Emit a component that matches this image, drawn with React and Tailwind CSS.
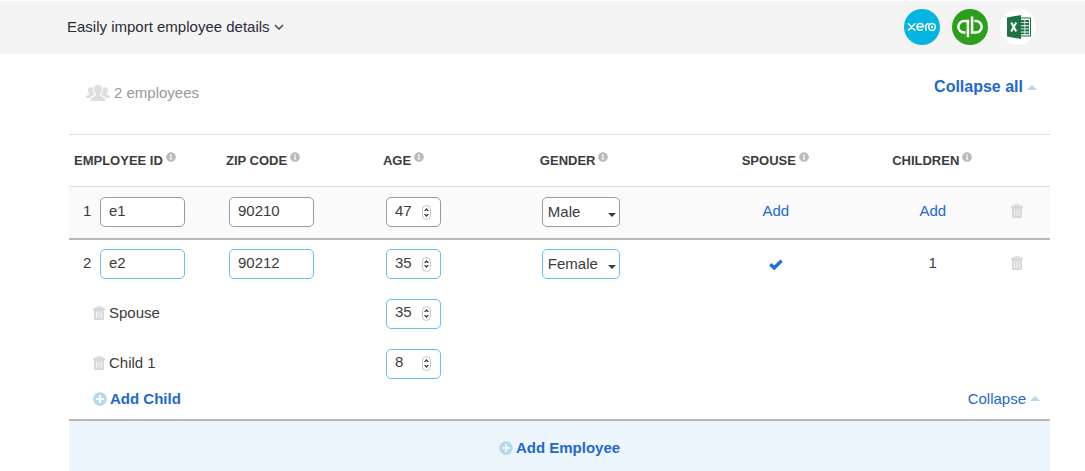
import React, { useState } from 'react';
import { FaInfoCircle, FaPlusCircle } from 'react-icons/fa';

const columns = ['Employee ID', 'Zip code', 'Age', 'Gender', 'Spouse', 'Children'];

const fieldColors = {
  saved: 'border-[#9b9b9b]',
  open: 'border-[#66c0f4]',
};

function TrashIcon() {
  return (
    <svg viewBox="0 0 12 14" className="w-3 h-3.5 fill-[#d8d8d8]" aria-hidden="true">
      <path fillRule="evenodd" d="M3.500 1.500Q3.500 0 5 0h2q1.500 0 1.500 1.500h2q1.500 0 1.500 1.500v1H0V3q0-1.500 1.500-1.500zM4.800 1.500h2.400V1H4.800z" />
      <path fillRule="evenodd" d="M1 4h10v8.500q0 1.500-1.500 1.500h-7Q1 14 1 12.500zM3.200 5.500v6.500h.8V5.500zM5.600 5.500v6.500h.8V5.500zM8 5.500v6.500h.8V5.500z" />
    </svg>
  );
}

function CheckIcon() {
  return (
    <svg viewBox="0 0 14 11" className="inline w-3.5 h-[11px]" role="img" aria-label="Has spouse">
      <path d="M1.400 5.200L5.200 9l7.400-7.400" fill="none" stroke="#1f6fd6" strokeWidth="3.400" />
    </svg>
  );
}

function PeopleIcon() {
  return (
    <svg viewBox="0 0 24 16" className="w-6 h-4 fill-[#dedede]" aria-hidden="true">
      <path d="M12 0c2.500 0 4 1.500 4 4.400 0 1.900-.8 3.700-1.900 4.600v1.500c0 .7 3.800 1.500 4.700 2.800.5.700.6 1.800.6 2.700H4.600c0-.9.1-2 .6-2.700.9-1.300 4.700-2.100 4.700-2.800V9C8.800 8.100 8 6.300 8 4.400 8 1.500 9.500 0 12 0z" />
      <path d="M5 2.200c.9 0 1.600.2 2.100.7-.5 2.300.2 4.800 1.500 6.300v.9L5 11.700l-1.200 1.400H0c0-1 0-1.700.6-2.200.9-.8 2.900-1.200 2.900-1.800v-.8C2.500 7.500 1.900 6.500 1.900 5c0-1.800 1.300-2.800 3.100-2.800z" />
      <path d="M19 2.200c-.9 0-1.600.2-2.100.7.5 2.300-.2 4.800-1.500 6.300v.9l3.600 1.600 1.200 1.400H24c0-1 0-1.700-.6-2.200-.9-.8-2.900-1.200-2.900-1.800v-.8c1-.8 1.600-1.800 1.600-3.300 0-1.800-1.300-2.800-3.100-2.800z" />
    </svg>
  );
}

function UpTriangle() {
  return (
    <svg viewBox="0 0 10 5" className="w-2.5 h-[5px] fill-[#b5d9ee]" aria-hidden="true">
      <path d="M5 0l5 5H0z" />
    </svg>
  );
}

function XeroLogo() {
  return (
    <svg viewBox="0 0 36 36" className="size-9" aria-hidden="true">
      <circle cx="18" cy="18" r="18" fill="#04b5e2" />
      <g fill="none" stroke="#fff" strokeWidth="1.500" strokeLinecap="round">
        <path d="M4.500 14.800l6.400 6.400M10.900 14.800l-6.400 6.400" />
        <path d="M12.900 17.800h6.600a3.300 3.400 0 1 0-1.200 2.700" />
        <path d="M21.800 21.200v-3.600q0-2.800 2.400-2.900" />
        <circle cx="28" cy="18" r="3.400" />
      </g>
      <circle cx="28" cy="18" r="1.200" fill="#fff" />
    </svg>
  );
}

function QuickBooksLogo() {
  return (
    <svg viewBox="0 0 36 36" className="size-9" aria-hidden="true">
      <circle cx="18" cy="18" r="18" fill="#2ca01c" />
      <g fill="none" stroke="#fff" strokeWidth="2.500">
        <path d="M13.500 23.500H12a5.700 5.700 0 0 1 0-11.400h3.900v16.200" />
        <path d="M22.500 12.100H24a5.700 5.700 0 0 1 0 11.400h-3.900V7.500" />
      </g>
    </svg>
  );
}

function ExcelLogo() {
  return (
    <svg viewBox="0 0 36 36" className="size-9" aria-hidden="true">
      <circle cx="18" cy="18" r="18" fill="#fff" />
      <path d="M20 8.500h11v19H20z" fill="#1f7244" />
      <path d="M20 9.500h10v17H20z" fill="#fff" />
      <path d="M21 11h3.500v2.200H21zM25.300 11h3.700v2.200h-3.700zM21 14.100h3.500v2.200H21zM25.300 14.100h3.700v2.200h-3.700zM21 17.200h3.500v2.200H21zM25.300 17.200h3.700v2.200h-3.700zM21 20.300h3.500v2.200H21zM25.300 20.300h3.700v2.200h-3.700zM21 23.400h3.500v1.800H21zM25.300 23.400h3.700v1.800h-3.700z" fill="#1f7244" />
      <path d="M7 8.500l14-2.500v24L7 27.500z" fill="#1f7244" />
      <path d="M11.200 13.500l5 9M16.200 13.500l-5 9" stroke="#fff" strokeWidth="2" />
    </svg>
  );
}

function TextField({ label, value, tone }) {
  return (
    <input
      type="text"
      aria-label={label}
      defaultValue={value}
      className={`block w-[85px] h-[30px] pl-2 pb-1 rounded-[5px] border bg-white ${fieldColors[tone]}`}
    />
  );
}

function AgeField({ label, value, tone }) {
  const [age, setAge] = useState(value);

  return (
    <div className={`flex items-center w-[55px] h-[30px] pl-2 pr-[9px] rounded-[5px] border bg-white ${fieldColors[tone]}`}>
      <input
        type="number"
        aria-label={label}
        value={age}
        onChange={(e) => setAge(e.target.value)}
        className="min-w-0 flex-1 h-full pb-1 outline-none [appearance:textfield] [&::-webkit-inner-spin-button]:appearance-none"
      />
      <div className="flex flex-col shrink-0 w-[9px] h-[15px] py-px rounded-full border border-[#c4c4c4] bg-white">
        <button type="button" aria-label={`Increase ${label}`} onClick={() => setAge(Number(age) + 1)} className="flex flex-1 items-center justify-center">
          <svg viewBox="0 0 5 3" className="w-[5px] h-[3px] fill-[#333]" aria-hidden="true">
            <path d="M2.500 0L5 3H3.500l-1-1-1 1H0z" />
          </svg>
        </button>
        <button type="button" aria-label={`Decrease ${label}`} onClick={() => setAge(Number(age) - 1)} className="flex flex-1 items-center justify-center">
          <svg viewBox="0 0 5 3" className="w-[5px] h-[3px] fill-[#333]" aria-hidden="true">
            <path d="M2.500 3L5 0H3.500l-1 1-1-1H0z" />
          </svg>
        </button>
      </div>
    </div>
  );
}

function GenderField({ label, value, tone }) {
  return (
    <div className="relative w-[78px]">
      <select
        aria-label={label}
        defaultValue={value}
        className={`block w-full h-[30px] pl-[5px] appearance-none rounded-[5px] border bg-white ${fieldColors[tone]}`}
      >
        <option>Male</option>
        <option>Female</option>
      </select>
      <svg viewBox="0 0 8 4" className="absolute right-1 top-4 w-2 h-1 fill-[#3c3c3c] pointer-events-none" aria-hidden="true">
        <path d="M0 0h8L4 4z" />
      </svg>
    </div>
  );
}

function EmployeeCells({ number, zip, age, gender, tone, spouse, children }) {
  return (
    <>
      <td>
        <div className="flex items-center">
          <span className="w-[31px] pl-3.5 pb-0.5">{number}</span>
          <TextField label={`Employee ${number} ID`} value={`e${number}`} tone={tone} />
        </div>
      </td>
      <td className="pl-[3px]">
        <TextField label={`Employee ${number} zip code`} value={zip} tone={tone} />
      </td>
      <td className="pl-[3px]">
        <AgeField label={`Employee ${number} age`} value={age} tone={tone} />
      </td>
      <td className="pl-0.5">
        <GenderField label={`Employee ${number} gender`} value={gender} tone={tone} />
      </td>
      <td className="text-center pl-px pb-0.5">{spouse}</td>
      <td className="text-center pl-px pb-0.5">{children}</td>
      <td className="pb-0.5">
        <button type="button" aria-label={`Remove employee ${number}`} className="block">
          <TrashIcon />
        </button>
      </td>
    </>
  );
}

function DependentRow({ name, age }) {
  return (
    <tr className="h-[50px]">
      <td colSpan={2} className="pl-6">
        <div className="flex items-center gap-1 pb-0.5">
          <button type="button" aria-label={`Remove ${name}`}>
            <TrashIcon />
          </button>
          {name}
        </div>
      </td>
      <td className="pl-[3px]">
        <AgeField label={`${name} age`} value={age} tone="open" />
      </td>
      <td colSpan={4} />
    </tr>
  );
}

export default function App() {
  return (
    <div className="font-['Liberation_Sans',Arial,sans-serif] text-base leading-5 text-[#3c3c3c]">
      <header className="flex items-center justify-between h-[54px] pl-[67px] pr-[49px] pb-0.5 border-t border-white bg-[#f4f4f4]">
        <button type="button" className="flex items-center gap-1 text-[15px] text-[#2b2b3a]">
          Easily import employee details
          <svg viewBox="0 0 10 6" className="w-2.5 h-1.5" fill="none" stroke="#3c3c3c" strokeWidth="1.300" aria-hidden="true">
            <path d="M1 1l4 4 4-4" />
          </svg>
        </button>
        <div className="flex gap-3">
          <button type="button" aria-label="Import from Xero"><XeroLogo /></button>
          <button type="button" aria-label="Import from QuickBooks"><QuickBooksLogo /></button>
          <button type="button" aria-label="Import from Excel"><ExcelLogo /></button>
        </div>
      </header>

      <main className="pl-[69px] pr-[35px]">
        <div className="flex items-start justify-between h-20 pl-[17px] pr-[13px] pt-[23px]">
          <div className="flex items-center gap-1 pt-1.5 text-[15px] text-[#999]">
            <PeopleIcon />
            2 employees
          </div>
          <button type="button" className="flex items-center gap-1 font-bold text-[#2268d1]">
            Collapse all
            <UpTriangle />
          </button>
        </div>

        <table className="w-full table-fixed border-collapse text-[15px]">
          <colgroup>
            <col className="w-[16%]" />
            <col className="w-[16%]" />
            <col className="w-[16%]" />
            <col className="w-[16%]" />
            <col className="w-[16%]" />
            <col className="w-[16%]" />
            <col className="w-[4%]" />
          </colgroup>
          <thead>
            <tr className="h-[52px] border-y border-[#dedede]">
              {columns.map((name) => (
                <th
                  key={name}
                  scope="col"
                  className="text-[13px] font-bold uppercase text-left first:pl-[5px] nth-[n+5]:text-center"
                >
                  <span className="inline-flex items-center gap-[3px]">
                    {name}
                    <FaInfoCircle className="size-2.5 mb-2 text-[#bbb]" />
                  </span>
                </th>
              ))}
              <td />
            </tr>
          </thead>
          <tbody>
            <tr className="h-[52px] bg-[#fafafa] border-b-2 border-[#b8b8b8]">
              <EmployeeCells
                number={1}
                zip="90210"
                age={47}
                gender="Male"
                tone="saved"
                spouse={<button type="button" className="text-[#2268d1]">Add</button>}
                children={<button type="button" className="text-[#2268d1]">Add</button>}
              />
            </tr>
            <tr className="h-[50px]">
              <EmployeeCells
                number={2}
                zip="90212"
                age={35}
                gender="Female"
                tone="open"
                spouse={<CheckIcon />}
                children={1}
              />
            </tr>
            <DependentRow name="Spouse" age={35} />
            <DependentRow name="Child 1" age={8} />
            <tr className="border-b-2 border-[#b8b8b8]">
              <td colSpan={7} className="pl-6 pr-2.5 pb-2.5">
                <div className="flex justify-between">
                  <button type="button" className="flex items-center gap-[3px] font-bold text-[#2268d1]">
                    <FaPlusCircle className="size-3.5 text-[#b5d9ee]" />
                    Add Child
                  </button>
                  <button type="button" className="flex items-center gap-1 text-[#2268d1]">
                    Collapse
                    <UpTriangle />
                  </button>
                </div>
              </td>
            </tr>
          </tbody>
        </table>

        <button type="button" className="flex items-center justify-center gap-[3px] w-full h-[50px] pt-1 bg-[#eef6fd] text-[15px] font-bold text-[#2268d1]">
          <FaPlusCircle className="size-3.5 text-[#b5d9ee]" />
          Add Employee
        </button>
      </main>
    </div>
  );
}
